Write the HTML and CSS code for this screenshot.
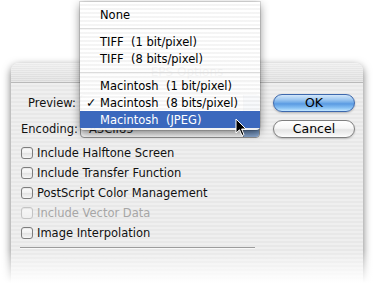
FILE: index.html
```html
<!DOCTYPE html>
<html lang="en">
<head>
<meta charset="utf-8">
<title>EPS Options</title>
<link rel="stylesheet" href="styles.css">
</head>
<body>
<div class="stage">
  <div class="dialog">
    <div class="titlebar">EPS Options</div>
    <div class="content">
      <div class="top">
        <div class="fields">
          <div class="field">
            <span class="label">Preview:</span>
            <div class="popup"><span class="popup-text"></span><span class="popup-arrow"></span></div>
          </div>
          <div class="field">
            <span class="label label-enc">Encoding:</span>
            <div class="popup"><span class="popup-text">ASCII85</span><span class="popup-arrow"></span></div>
          </div>
        </div>
        <div class="buttons">
          <button class="btn btn-ok">OK</button>
          <button class="btn btn-cancel">Cancel</button>
        </div>
      </div>
      <ul class="checks">
        <li class="check"><span class="box"></span>Include Halftone Screen</li>
        <li class="check"><span class="box"></span>Include Transfer Function</li>
        <li class="check"><span class="box"></span>PostScript Color Management</li>
        <li class="check disabled"><span class="box"></span>Include Vector Data</li>
        <li class="check"><span class="box"></span>Image Interpolation</li>
      </ul>
      <div class="rule"></div>
    </div>
  </div>

  <div class="menu">
    <div class="item"><span class="mark"></span><span class="text">None</span></div>
    <div class="sep"></div>
    <div class="item"><span class="mark"></span><span class="text">TIFF  (1 bit/pixel)</span></div>
    <div class="item"><span class="mark"></span><span class="text">TIFF  (8 bits/pixel)</span></div>
    <div class="sep"></div>
    <div class="item"><span class="mark"></span><span class="text">Macintosh  (1 bit/pixel)</span></div>
    <div class="item"><span class="mark">✓</span><span class="text">Macintosh  (8 bits/pixel)</span></div>
    <div class="item selected"><span class="mark"></span><span class="text">Macintosh  (JPEG)</span></div>
  </div>

  <svg class="cursor" width="13" height="20" viewBox="0 0 13 20">
    <path d="M1 1 L1 15 L4.5 11.8 L7 17.5 L9 16.6 L6.6 11 L11 11 Z" fill="#000" stroke="#fff" stroke-width="1" stroke-linejoin="round"/>
  </svg>

  <div class="fade"></div>
</div>
</body>
</html>
```

FILE: styles.css
```css
* { box-sizing: border-box; }

html, body {
  margin: 0;
  padding: 0;
  background: #fff;
}

body {
  font-family: "DejaVu Sans", "Lucida Grande", sans-serif;
  font-size: 11.5px;
  color: #111;
}

.stage {
  position: relative;
  width: 375px;
  height: 289px;
  overflow: hidden;
  background: #fff;
}

/* ---------- dialog window ---------- */
.dialog {
  margin: 63px 0 0 11px;
  width: 352px;
  height: 250px;
  border-radius: 8px 8px 0 0;
  background: repeating-linear-gradient(to bottom, #efefef 0 2px, #e8e8e8 2px 4px);
  box-shadow: 0 3px 9px rgba(0, 0, 0, 0.55);
}

.titlebar {
  height: 20px;
  line-height: 19px;
  text-align: center;
  font-size: 12px;
  color: #3a3a3a;
  border-radius: 8px 8px 0 0;
  border-bottom: 1px solid #b9b9b9;
  background:
    repeating-linear-gradient(to bottom, rgba(255,255,255,0.35) 0 1px, rgba(255,255,255,0) 1px 2px),
    linear-gradient(to bottom, #ececec, #dadada);
}

.content {
  padding: 11px 8px 0 10px;
}

.top {
  display: flex;
  align-items: flex-start;
}

.fields {
  display: flex;
  flex-direction: column;
  gap: 8px;
}

.field {
  display: flex;
  align-items: center;
  height: 18px;
  gap: 4px;
}

.label {
  width: 55px;
  text-align: right;
  white-space: nowrap;
}

.label-enc {
  padding-right: 3px;
}

.popup {
  width: 180px;
  height: 18px;
  display: flex;
  align-items: center;
  border: 1px solid #8e8e8e;
  border-radius: 4px;
  background: linear-gradient(to bottom, #ffffff, #eeeeee 50%, #e2e2e2 51%, #f7f7f7);
  overflow: hidden;
}

.popup-text {
  flex: 1;
  padding-left: 8px;
  white-space: pre;
  color: #222;
}

.popup-arrow {
  width: 16px;
  height: 100%;
  background: linear-gradient(to bottom, #9fb6d3, #6f8fb8 50%, #5c7eaa 51%, #8eaad0);
  border-left: 1px solid #6c7c94;
}

.buttons {
  margin-left: 13px;
  display: flex;
  flex-direction: column;
  gap: 8px;
}

.btn {
  width: 82px;
  height: 18px;
  padding: 0;
  font-family: inherit;
  font-size: 12.5px;
  line-height: 16px;
  color: #000;
  border-radius: 9px;
  cursor: default;
}

.btn-ok {
  border: 1px solid #3d68ad;
  background: linear-gradient(to bottom, #d3e7fa 0%, #9cc6f0 30%, #6aa6e6 50%, #5a9ae2 55%, #86c0f3 80%, #c2e6ff 100%);
  box-shadow: 0 1px 2px rgba(0, 0, 0, 0.25);
}

.btn-cancel {
  border: 1px solid #7f7f7f;
  background: linear-gradient(to bottom, #ffffff 0%, #f6f6f6 45%, #e4e4e4 55%, #f4f4f4 85%, #ffffff 100%);
  box-shadow: 0 1px 2px rgba(0, 0, 0, 0.2);
}

/* ---------- checkboxes ---------- */
.checks {
  list-style: none;
  margin: 5px 0 0;
  padding: 0;
}

.check {
  height: 20px;
  display: flex;
  align-items: center;
  gap: 4px;
  white-space: nowrap;
}

.box {
  width: 12px;
  height: 12px;
  border: 1px solid #7d7d7d;
  border-radius: 3px;
  background: linear-gradient(to bottom, #fdfdfd, #f0f0f0 50%, #e2e2e2 51%, #f6f6f6);
  box-shadow: inset 0 1px 1px rgba(0, 0, 0, 0.08);
}

.check.disabled {
  color: #a6a6a6;
}

.check.disabled .box {
  border-color: #c4c4c4;
  background: linear-gradient(to bottom, #f8f8f8, #efefef);
}

.rule {
  margin: 4px 0 0 -1px;
  width: 235px;
  height: 2px;
  border-top: 1px solid #9c9c9c;
  border-bottom: 1px solid #f8f8f8;
}

/* ---------- popup menu (overlay) ---------- */
.menu {
  position: absolute;
  left: 80px;
  top: 2px;
  width: 180px;
  padding: 4px 0 2px;
  border-radius: 0 0 4px 4px;
  background: repeating-linear-gradient(to bottom, rgba(255,255,255,0.95) 0 2px, rgba(244,244,244,0.95) 2px 4px);
  box-shadow: 0 0 0 1px rgba(0,0,0,0.12), 0 3px 10px rgba(0, 0, 0, 0.45);
  font-size: 11.5px;
}

.item {
  height: 17px;
  display: flex;
  align-items: center;
  padding-left: 6px;
  color: #000;
}

.mark {
  width: 14px;
  font-size: 12.5px;
  font-weight: bold;
}

.text {
  white-space: pre;
}

.item.selected {
  background: #3b68bd;
  color: #fff;
}

.sep {
  height: 10px;
  display: flex;
  align-items: center;
}

.sep::before {
  content: "";
  display: block;
  width: 100%;
  height: 1px;
  background: #dcdcdc;
}

/* ---------- cursor + fade (overlays) ---------- */
.cursor {
  position: absolute;
  left: 235px;
  top: 118px;
}

.fade {
  position: absolute;
  left: 0;
  right: 0;
  top: 250px;
  height: 39px;
  background: linear-gradient(to bottom, rgba(255,255,255,0), #fff 85%);
}
```
